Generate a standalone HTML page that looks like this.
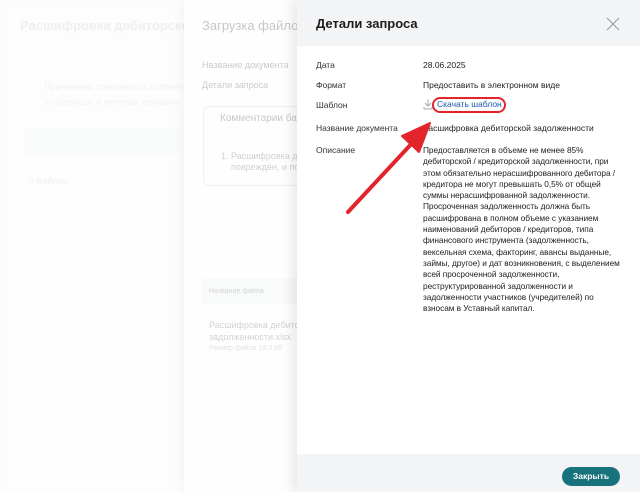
<!DOCTYPE html>
<html><head><meta charset="utf-8"><style>
*{margin:0;padding:0;box-sizing:border-box}
body{width:640px;height:492px;overflow:hidden;background:#fbfcfc;font-family:"Liberation Sans","Noto Sans CJK SC",sans-serif;position:relative}
.a{position:absolute;white-space:nowrap}
</style></head><body>
<div class="a" style="left:2px;top:2px;width:180px;height:490px;background:#fdfdfd"></div>
<div class="a" style="left:20px;top:18px;font-size:13px;font-weight:bold;color:#eeeff0">Расшифровка дебиторской з</div>
<div class="a" style="left:44px;top:82px;font-size:9px;color:#f0f1f1">Принимаем оригиналы в соответствии</div>
<div class="a" style="left:46px;top:97px;font-size:9px;color:#f2f3f3">с подписью и печатью компании</div>
<div class="a" style="left:24px;top:128px;width:160px;height:26px;background:#fafbfb"></div>
<div class="a" style="left:28px;top:176px;font-size:9px;color:#f0f1f2">0 Файлов</div>

<div class="a" style="left:184px;top:0;width:114px;height:492px;background:#fefefe;box-shadow:-4px 0 10px rgba(0,0,0,0.03)"></div>
<div class="a" style="left:202px;top:18px;font-size:13px;color:#c5c8cb">Загрузка файлов</div>
<div class="a" style="left:202px;top:60px;font-size:9px;color:#c9cbcd">Название документа</div>
<div class="a" style="left:202px;top:80px;font-size:9px;color:#c9cbcd">Детали запроса</div>
<div class="a" style="left:203px;top:106px;width:100px;height:80px;border:1px solid #f0f1f2;border-radius:6px"></div>
<div class="a" style="left:220px;top:113px;font-size:10px;color:#c5c8cb">Комментарии бан</div>
<div class="a" style="left:221px;top:151px;font-size:9px;color:#cdd0d2">1. Расшифровка дебі</div>
<div class="a" style="left:231px;top:162px;font-size:9px;color:#cdd0d2">повреждён, и пов</div>
<div class="a" style="left:202px;top:278px;width:100px;height:26px;background:#f9fafa"></div>
<div class="a" style="left:209px;top:288px;font-size:7px;color:#d2d4d6">Название файла</div>
<div class="a" style="left:209px;top:320px;font-size:9px;color:#d0d2d4">Расшифровка дебиторс</div>
<div class="a" style="left:209px;top:332px;font-size:9px;color:#d0d2d4">задолженности.xlsx</div>
<div class="a" style="left:209px;top:345px;font-size:7px;color:#e0e2e3">Размер файла 18.0 Кб</div>

<div class="a" style="left:297px;top:0;width:343px;height:492px;background:#fff;box-shadow:-6px 0 10px rgba(0,0,0,0.08)"></div>
<div class="a" style="left:297px;top:0;width:343px;height:46px;background:#f3f4f6"></div>
<div class="a" style="left:316px;top:16px;font-size:13px;font-weight:bold;color:#1c1c1c">Детали запроса</div>
<svg class="a" style="left:606px;top:17px" width="14" height="14"><path d="M1 1L13 13M13 1L1 13" stroke="#9a9ea3" stroke-width="1.2"/></svg>
<div class="a" style="left:316px;top:60px;font-size:8.5px;color:#333">Дата</div>
<div class="a" style="left:423px;top:60px;font-size:8.5px;color:#222">28.06.2025</div>
<div class="a" style="left:316px;top:80px;font-size:8.5px;color:#333">Формат</div>
<div class="a" style="left:423px;top:80px;font-size:8.5px;color:#222">Предоставить в электронном виде</div>
<div class="a" style="left:316px;top:100px;font-size:8.5px;color:#333">Шаблон</div>
<svg class="a" style="left:423px;top:98px" width="10" height="12"><path d="M5 1V8M2 5L5 8L8 5M1 9V11H9V9" stroke="#aaa" fill="none" stroke-width="1"/></svg>
<div class="a" style="left:437px;top:99px;font-size:8.5px;color:#1a56b0">Скачать шаблон</div>
<div class="a" style="left:432px;top:97px;width:74px;height:16px;border:2.5px solid #e3242b;border-radius:8px"></div>
<div class="a" style="left:316px;top:123px;font-size:8.5px;color:#333">Название документа</div>
<div class="a" style="left:423px;top:123px;font-size:8.5px;color:#222">Расшифровка дебиторской задолженности</div>
<div class="a" style="left:316px;top:145px;font-size:8.5px;color:#333">Описание</div>
<div class="a" style="left:423px;top:145px;font-size:8.3px;line-height:11.3px;letter-spacing:-0.05px;color:#222">Предоставляется в объеме не менее 85%<br>дебиторской / кредиторской задолженности, при<br>этом обязательно нерасшифрованного дебитора /<br>кредитора не могут превышать 0,5% от общей<br>суммы нерасшифрованной задолженности.<br>Просроченная задолженность должна быть<br>расшифрована в полном объеме с указанием<br>наименований дебиторов / кредиторов, типа<br>финансового инструмента (задолженность,<br>вексельная схема, факторинг, авансы выданные,<br>займы, другое) и дат возникновения, с выделением<br>всей просроченной задолженности,<br>реструктурированной задолженности и<br>задолженности участников (учредителей) по<br>взносам в Уставный капитал.</div>
<svg class="a" style="left:330px;top:110px" width="110" height="110"><path d="M18 102L85 30" stroke="#e3242b" stroke-width="4" stroke-linecap="round"/><path d="M100 13L72 26L89 42Z" fill="#e3242b" stroke="#e3242b" stroke-width="2" stroke-linejoin="round"/></svg>

<div class="a" style="left:297px;top:454px;width:343px;height:38px;background:#f3f4f6"></div>
<div class="a" style="left:562px;top:467px;width:58px;height:19px;background:#17727b;border-radius:10px;color:#fff;font-size:8.5px;font-weight:bold;text-align:center;line-height:19px">Закрыть</div>
</body></html>
